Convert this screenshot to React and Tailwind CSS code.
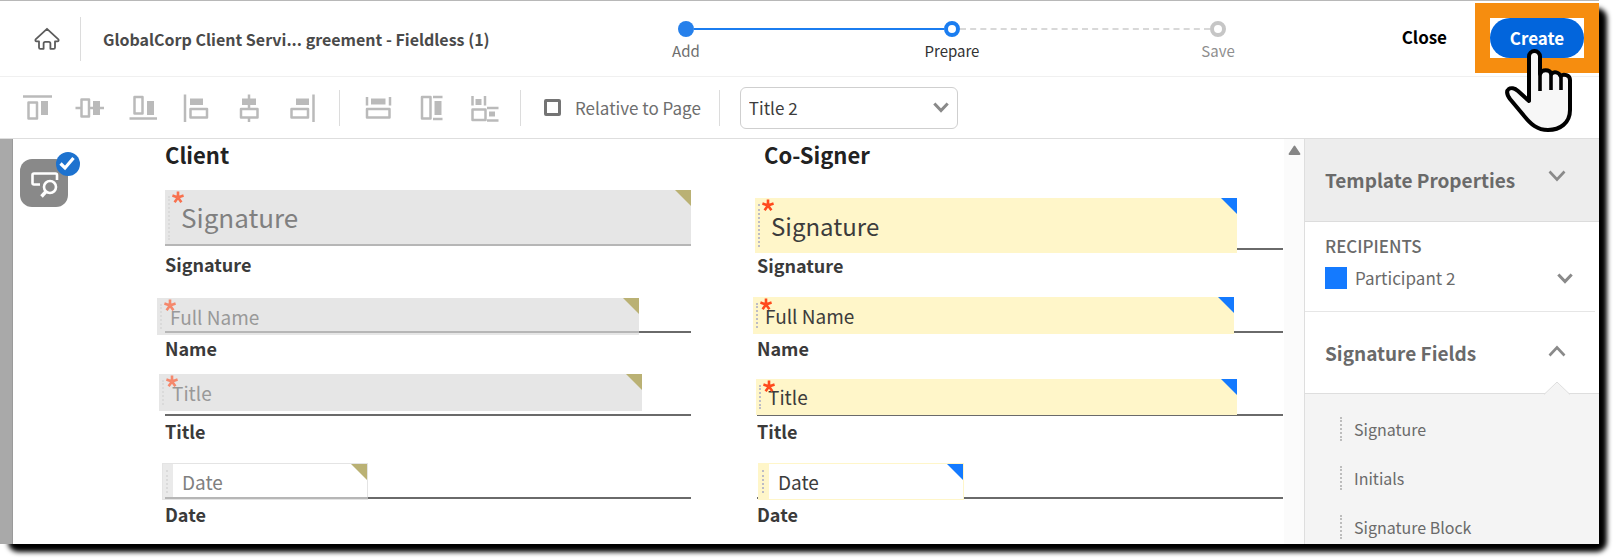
import React, { useState } from "react";
import clsx from "clsx";

const STEPS = [
  { label: "Add", state: "done" },
  { label: "Prepare", state: "current" },
  { label: "Save", state: "todo" },
];

const ALIGN_TOOLS = [
  {
    label: "Align top",
    solid: ["M20 9h7v14h-7z"],
    lines: "M2 4.5H31M7.5 10.5H16V26.5H7.5Z",
  },
  {
    label: "Align middle",
    solid: ["M19 9h7v14h-7z"],
    lines: "M7.5 7.5H15V24.5H7.5ZM1.5 16H7M15 16H19M26 16H30",
  },
  {
    label: "Align bottom",
    solid: ["M20 9h7v14h-7z"],
    lines: "M2.5 26.5H30M7.5 5H15.5V21.5H7.5Z",
  },
  {
    label: "Align left",
    solid: ["M10 6.5h13v6.5h-13z"],
    lines: "M5 2.5V30M10.5 17H27V25.5H10.5Z",
  },
  {
    label: "Align center",
    solid: ["M9 6.5h14v6.5h-14z"],
    lines: "M16 2.5V7M16 13V17M16 25.5V30M8 17H24.5V25.5H8Z",
  },
  {
    label: "Align right",
    solid: ["M10 6.5h13v6.5h-13z"],
    lines: "M27.5 2.5V30M5.5 17H22V25.5H5.5Z",
  },
];

const SIZE_TOOLS = [
  {
    label: "Match width",
    solid: ["M9 6.5h14.5v6h-14.5z"],
    lines: "M5 5V13.5M28 5V13.5M5 17H27.5V25.5H5Z",
  },
  {
    label: "Match height",
    solid: ["M19.5 9h7v14h-7z"],
    lines: "M18 5H27.5M18 27H27.5M7 5H15.5V26.5H7Z",
  },
  {
    label: "Match size",
    solid: ["M7.5 7h6v6h-6z", "M21 19.5h6v5h-6z"],
    lines: "M4.5 4V13.5M17 4V13.5M4.5 17.5H17.5V28H4.5ZM19 16H30.5M19 28.5H30.5",
  },
];

const CLIENT_ROWS = [
  {
    label: "Signature",
    slot: "h-[46px]",
    caption: "h-[37px]",
    field: { text: "Signature", required: true, size: "text-[26px] pl-4 pb-[2px]", box: "left-0 -top-[10px] h-[56px] w-full" },
  },
  {
    label: "Name",
    field: { text: "Full Name", required: true, size: "text-[19px] pl-[13px]", box: "-left-2 top-[15px] h-[37px] w-[482px]", faint: true },
  },
  {
    label: "Title",
    field: { text: "Title", required: true, size: "text-[19px] pl-[13px]", box: "-left-[6px] top-2 h-[37px] w-[483px]", faint: true },
  },
  {
    label: "Date",
    field: { text: "Date", outlined: true, size: "text-[19px] pl-[19px]", box: "-left-[3px] top-[14px] h-[37px] w-[206px]" },
  },
];

const COSIGNER_ROWS = [
  {
    label: "Signature",
    field: { text: "Signature", required: true, size: "text-[24px] pl-4", box: "-left-[2px] -top-[2px] h-[55px] w-[482px]" },
  },
  {
    label: "Name",
    field: { text: "Full Name", required: true, size: "text-[19px] pl-3", box: "-left-1 top-[14px] h-[37px] w-[481px]" },
  },
  {
    label: "Title",
    field: { text: "Title", required: true, size: "text-[19px] pl-3", box: "-left-[1px] top-[13px] h-[36px] w-[481px]" },
  },
  {
    label: "Date",
    field: { text: "Date", outlined: true, size: "text-[19px] pl-[19px]", box: "left-[1px] top-[14px] h-[37px] w-[206px]" },
  },
];

const FIELD_TYPES = ["Signature", "Initials", "Signature Block"];

const Chevron = ({ up, small, className }) => (
  <svg
    viewBox="0 0 18 12"
    fill="none"
    stroke="#8a8a8a"
    strokeWidth={small ? 3.4 : 2.6}
    className={clsx("shrink-0", small ? "w-4 h-[11px]" : "w-[18px] h-3", className)}
    aria-hidden="true"
  >
    <path d={up ? "M1.5 10.5 9 2.5l7.5 8" : "M1.5 1.5 9 9.5l7.5-8"} />
  </svg>
);

const ToolButton = ({ tool }) => (
  <button aria-label={tool.label} className="w-[53px] h-8 flex justify-center">
    <svg viewBox="0 0 32 32" className="w-8 h-8 text-[#bababa]" aria-hidden="true">
      {tool.solid.map((d) => (
        <path key={d} d={d} fill="currentColor" />
      ))}
      <path d={tool.lines} fill="none" stroke="currentColor" strokeWidth="2.5" strokeLinejoin="round" />
    </svg>
  </button>
);

const Divider = ({ className }) => <span className={clsx("w-px bg-[#dcdcdc] shrink-0", className)} />;

const Grip = ({ className }) => <span className={clsx("border-l-2 border-dotted", className)} />;

const Asterisk = ({ className }) => (
  <svg viewBox="0 0 12 12" className={clsx("w-3 h-3", className)} aria-hidden="true">
    <path
      d="M6 6.5V.5M6 6.5.4 4.6M6 6.5l5.6-1.9M6 6.5l-3.4 4.7M6 6.5l3.4 4.7"
      stroke="#ff4a1c"
      strokeWidth="2.6"
      fill="none"
    />
  </svg>
);

const Stepper = () => (
  <ol className="flex w-[548px] shrink-0">
    {STEPS.map(({ label, state }, i) => (
      <React.Fragment key={label}>
        {i > 0 && (
          <li
            aria-hidden="true"
            className={clsx(
              "flex-1 mt-[7px] h-0",
              state === "current" ? "border-t-2 border-[#1b7df0]" : "border-t-2 border-dashed border-[#d8d8d8]"
            )}
          />
        )}
        <li className="w-4 flex flex-col items-center">
          <span
            className={clsx(
              "size-4 rounded-full shrink-0",
              state === "done" && "bg-[#2680eb]",
              state === "current" && "border-4 border-[#1b7df0] bg-white",
              state === "todo" && "border-4 border-[#c6c6c6] bg-white"
            )}
          />
          <span
            className={clsx(
              "mt-[2px] text-[15px] leading-6 whitespace-nowrap",
              state === "done" && "text-[#6e6e6e]",
              state === "current" && "text-[#323232]",
              state === "todo" && "text-[#8e8e8e]"
            )}
          >
            {label}
          </span>
        </li>
      </React.Fragment>
    ))}
  </ol>
);

const FADED = {
  Signature: "w-full",
  Name: "w-[474px]",
  Date: "w-[203px]",
};

const PlacedField = ({ field, muted }) => {
  const { text, required, outlined, size, box, faint } = field;
  return (
    <button
      className={clsx(
        "absolute flex items-center text-left leading-8",
        box,
        size,
        muted && !outlined && "bg-[#e6e6e6]",
        muted && outlined && "bg-white/60 border border-[#e4e4e4]",
        !muted && !outlined && "bg-[#fff6c9]",
        !muted && outlined && "bg-white border border-[#fff6c9]",
        muted ? (faint ? "text-[#999]" : "text-[#808080]") : "text-[#3c3c3c]"
      )}
    >
      {outlined && <span className={clsx("absolute left-0 inset-y-0 w-[10px]", muted ? "bg-[#eaeaea]" : "bg-[#fff6c9]")} />}
      <Grip className={clsx("absolute left-[3px] inset-y-[6px]", muted ? "border-[#dadada]" : "border-[#bcbcc6]")} />
      {required && <Asterisk className={clsx("absolute left-[7px] top-px", muted && (faint ? "opacity-60" : "opacity-75"))} />}
      <span>{text}</span>
      <svg viewBox="0 0 16 16" className="absolute right-0 top-0 w-4 h-4" aria-hidden="true">
        <path d="M0 0H16V16Z" fill={muted ? "#bab174" : "#147aff"} />
      </svg>
    </button>
  );
};

const SignerColumn = ({ title, rows, muted, titleClass }) => (
  <section className="min-w-0">
    <h2 className={clsx("h-[61px] text-[22px] leading-[30px] font-bold text-[#222]", titleClass)}>{title}</h2>
    {rows.map(({ label, slot = "h-[50px]", caption = "h-[33px] pb-[2px]", field }) => (
      <div key={label}>
        <div className={clsx("relative border-b-2 border-[#6a6a6a]", slot)}>
          <PlacedField field={field} muted={muted} />
          {muted && FADED[label] && (
            <span className={clsx("absolute left-0 -bottom-[2px] h-[2px] bg-[#b6b6b6]", FADED[label])} />
          )}
        </div>
        <p className={clsx("flex items-center text-[18px] font-bold text-[#3a3a3a]", caption)}>{label}</p>
      </div>
    ))}
  </section>
);

const PointerHand = () => (
  <svg viewBox="0 0 68 86" className="absolute left-[29px] top-[44px] w-[68px] h-[86px] z-10 pointer-events-none" aria-hidden="true">
    <path
      d="M25 54V9.500a5.500 5.500 0 0 1 11 0V27c2-5 9.500-5 11.500 0 2-3 7.500-2 9 2 3-2.500 9.500-1 9.500 4V63C66 76 56 83 44 83 33 83 27 77 21 70L6 52C-1 42 7 38 14 44L25 54Z"
      fill="#f7f7f7"
      stroke="#000"
      strokeWidth="4"
      strokeLinejoin="round"
    />
    <path d="M36 24V44M47 27V43M57 30V43" stroke="#000" strokeWidth="3.6" fill="none" />
  </svg>
);

const Header = () => (
  <header className="flex items-start h-[77px] border-t border-b border-t-[#b8b8b8] border-b-[#f0f0f0]">
    <div className="w-[42.4%] h-full flex items-center">
      <a href="#home" aria-label="Home" className="ml-[34px]">
        <svg viewBox="0 0 26 24" className="w-[26px] h-6" fill="none" stroke="#5c5c5c" strokeWidth="1.8" strokeLinejoin="round" aria-hidden="true">
          <path d="M13 1.8 1.6 12.4c-.6.9 0 2 1 2H5V20.4q0 1.4 1.4 1.4H9.6V16.4q0-1.6 1.6-1.6h3.6q1.6 0 1.6 1.6V21.8H19.6Q21 21.8 21 20.4V14.4H23.4c1 0 1.6-1.1 1-2Z" />
        </svg>
      </a>
      <Divider className="ml-5 h-11" />
      <h1 className="ml-[22px] text-[16px] leading-6 font-bold text-[#4a4a4a] whitespace-nowrap">
        GlobalCorp Client Servi... greement - Fieldless (1)
      </h1>
    </div>
    <div className="pt-5">
      <Stepper />
    </div>
    <div className="ml-auto flex items-start">
      <button className="h-[72px] mr-[28px] text-[17px] font-bold text-black">Close</button>
      <div className="relative mt-[2px] p-[15px] bg-[#f68d0f]">
        <div className="bg-white">
          <button className="w-[94px] h-10 rounded-full bg-[#0265dc] text-white text-[17px] leading-[38px] font-bold">Create</button>
        </div>
        <PointerHand />
      </div>
    </div>
  </header>
);

const Toolbar = () => {
  const [relative, setRelative] = useState(false);
  return (
    <div className="flex items-center h-[62px] pl-[10px] border-b border-[#dedede]">
      {ALIGN_TOOLS.map((tool) => (
        <ToolButton key={tool.label} tool={tool} />
      ))}
      <Divider className="mx-[11px] h-9" />
      {SIZE_TOOLS.map((tool) => (
        <ToolButton key={tool.label} tool={tool} />
      ))}
      <Divider className="ml-[10px] h-9" />
      <label className="ml-[23px] flex items-center gap-[14px] text-[17px] text-[#6e6e6e] whitespace-nowrap">
        <input
          type="checkbox"
          checked={relative}
          onChange={(e) => setRelative(e.target.checked)}
          className="appearance-none size-[17px] rounded-xs border-[3px] border-[#747474] checked:bg-[#747474]"
        />
        Relative to Page
      </label>
      <Divider className="ml-[18px] h-9" />
      <div className="relative ml-5">
        <select
          aria-label="Field"
          className="appearance-none w-[218px] h-[42px] pl-2 rounded-md border border-[#cfcfcf] bg-white text-[17px] text-[#3c3c3c]"
        >
          <option>Title 2</option>
        </select>
        <Chevron small className="absolute right-[9px] top-[15px] pointer-events-none" />
      </div>
    </div>
  );
};

const Sidebar = () => (
  <aside className="w-[295px] shrink-0 flex flex-col border-l border-[#dedede] text-[#6a6a6a]">
    <button className="h-[83px] shrink-0 flex items-center justify-between pl-5 pr-[33px] bg-[#ededed] border-b border-[#dcdcdc]">
      <span className="text-[19px] leading-6 font-bold">Template Properties</span>
      <Chevron className="mb-2" />
    </button>
    <div className="h-[90px] shrink-0 mr-1 pt-[11px] pl-5 border-b border-[#e6e6e6]">
      <h3 className="text-[17px] leading-[26px] font-medium">RECIPIENTS</h3>
      <button className="mt-[7px] w-full flex items-center pr-[22px]">
        <span className="size-[22px] bg-[#147aff]" />
        <span className="ml-2 text-[17px] leading-6">Participant 2</span>
        <Chevron small className="ml-auto" />
      </button>
    </div>
    <button className="relative h-[82px] shrink-0 flex items-center justify-between pl-5 pr-[33px] border-b border-[#dedede]">
      <span className="text-[19px] leading-6 font-bold">Signature Fields</span>
      <Chevron up className="mb-1" />
      <svg viewBox="0 0 26 14" className="absolute right-[29px] -bottom-[2px] w-[26px] h-[14px]" aria-hidden="true">
        <path d="M0 13.5 13 1 26 13.5" fill="#f4f4f4" stroke="#dedede" />
      </svg>
    </button>
    <ul className="flex-1 pt-[10px] bg-[#f4f4f4] overflow-hidden">
      {FIELD_TYPES.map((name) => (
        <li key={name} className="h-[49px] flex items-center pl-[35px] text-[16px] whitespace-nowrap">
          <Grip className="h-6 border-[#bdbdbd]" />
          <span className="ml-3">{name}</span>
        </li>
      ))}
    </ul>
  </aside>
);

const DocumentPane = () => (
  <main className="flex-1 min-w-0 flex overflow-hidden">
    <div className="w-[13px] shrink-0 bg-[#a9a9a9] border-r border-[#9a9a9a]" />
    <div className="w-[152px] shrink-0 pl-[7px] pt-5">
      <button aria-label="Detect fields" className="relative size-12 rounded-xl bg-[#898989]">
        <svg viewBox="0 0 48 48" className="w-12 h-12" fill="none" stroke="#fff" strokeWidth="2.6" aria-hidden="true">
          <path d="M20 25.5H14q-1.5 0-1.5-1.5V16q0-1.5 1.5-1.5H35.5q1.5 0 1.5 1.5V21" />
          <circle cx="30" cy="28" r="6" />
          <path d="M26 32.5 21.5 37.5" strokeWidth="3.4" />
        </svg>
        <svg viewBox="0 0 24 24" className="absolute -right-3 -top-[7px] w-6 h-6" aria-hidden="true">
          <circle cx="12" cy="12" r="12" fill="#1d72cf" />
          <path d="M4.5 11.5l4.5 4.5 8.5-10" fill="none" stroke="#fff" strokeWidth="3.2" />
        </svg>
      </button>
    </div>
    <div className="flex-1 min-w-0 pr-px grid grid-cols-2 gap-x-[66px] content-start">
      <SignerColumn title="Client" rows={CLIENT_ROWS} muted />
      <SignerColumn title="Co-Signer" rows={COSIGNER_ROWS} titleClass="pl-[7px]" />
    </div>
    <div className="w-5 shrink-0 flex justify-center pt-[6px] bg-[#fbfbfb]">
      <svg viewBox="0 0 13 10" className="w-[13px] h-[10px]" aria-hidden="true">
        <path d="M1.5 9 6.5 1.5 11.5 9Z" fill="#868686" stroke="#868686" strokeWidth="1.8" strokeLinejoin="round" />
      </svg>
    </div>
  </main>
);

export default function App() {
  return (
    <div className="h-screen pr-4 pb-[15px] bg-white overflow-hidden font-['Noto_Sans_CJK_SC',sans-serif]">
      <div className="h-full rounded-[10px] shadow-[8px_8px_5px_#000]">
        <div className="h-full flex flex-col bg-white">
          <Header />
          <Toolbar />
          <div className="flex-1 min-h-0 flex">
            <DocumentPane />
            <Sidebar />
          </div>
        </div>
      </div>
    </div>
  );
}
